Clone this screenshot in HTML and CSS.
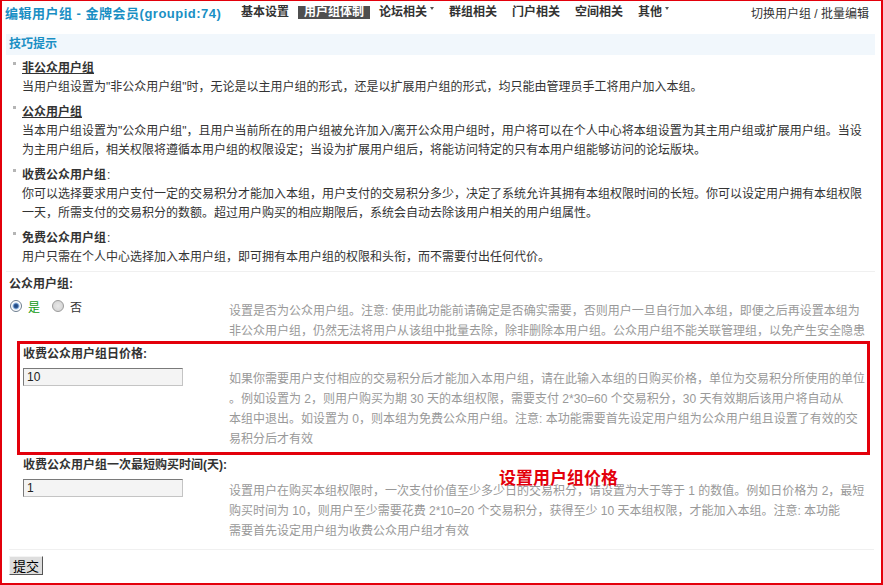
FILE: index.html
```html
<!DOCTYPE html>
<html lang="zh-CN">
<head>
    <meta charset="UTF-8">
    <title>编辑用户组 - 金牌会员</title>
    <link rel="stylesheet" href="styles.css">
</head>
<body>
<div class="frame">
    <div class="topbar">
        <h3 class="page-title">编辑用户组 - 金牌会员(groupid:74)</h3>
        <ul class="nav">
            <li>基本设置</li>
            <li class="current">用户组体制</li>
            <li>论坛相关<span class="caret"></span></li>
            <li>群组相关</li>
            <li>门户相关</li>
            <li>空间相关</li>
            <li>其他<span class="caret"></span></li>
        </ul>
        <a class="switch">切换用户组 / 批量编辑</a>
    </div>

    <div class="tips">
        <div class="tips-head">技巧提示</div>
        <ul class="tips-list">
            <li>
                <div class="tip-title"><u>非公众用户组</u></div>
                <div>当用户组设置为"非公众用户组"时，无论是以主用户组的形式，还是以扩展用户组的形式，均只能由管理员手工将用户加入本组。</div>
            </li>
            <li>
                <div class="tip-title"><u>公众用户组</u></div>
                <div>当本用户组设置为"公众用户组"，且用户当前所在的用户组被允许加入/离开公众用户组时，用户将可以在个人中心将本组设置为其主用户组或扩展用户组。当设<br>为主用户组后，相关权限将遵循本用户组的权限设定；当设为扩展用户组后，将能访问特定的只有本用户组能够访问的论坛版块。</div>
            </li>
            <li>
                <div class="tip-title">收费公众用户组<span class="colon">:</span></div>
                <div>你可以选择要求用户支付一定的交易积分才能加入本组，用户支付的交易积分多少，决定了系统允许其拥有本组权限时间的长短。你可以设定用户拥有本组权限<br>一天，所需支付的交易积分的数额。超过用户购买的相应期限后，系统会自动去除该用户相关的用户组属性。</div>
            </li>
            <li>
                <div class="tip-title">免费公众用户组<span class="colon">:</span></div>
                <div>用户只需在个人中心选择加入本用户组，即可拥有本用户组的权限和头衔，而不需要付出任何代价。</div>
            </li>
        </ul>
    </div>

    <form class="form">
        <div class="label">公众用户组:</div>
        <div class="row">
            <div class="field radios">
                <label class="yes"><input type="radio" name="public" checked>是</label>
                <label><input type="radio" name="public">否</label>
            </div>
            <div class="desc">设置是否为公众用户组。注意: 使用此功能前请确定是否确实需要，否则用户一旦自行加入本组，即便之后再设置本组为<br>非公众用户组，仍然无法将用户从该组中批量去除，除非删除本用户组。公众用户组不能关联管理组，以免产生安全隐患</div>
        </div>

        <div class="mark">
            <div class="label">收费公众用户组日价格:</div>
            <div class="row sub-row">
                <div class="field"><input class="txt" type="text" value="10"></div>
                <div class="desc">如果你需要用户支付相应的交易积分后才能加入本用户组，请在此输入本组的日购买价格，单位为交易积分所使用的单位<br>。例如设置为 2，则用户购买为期 30 天的本组权限，需要支付 2*30=60 个交易积分，30 天有效期后该用户将自动从<br>本组中退出。如设置为 0，则本组为免费公众用户组。注意: 本功能需要首先设定用户组为公众用户组且设置了有效的交<br>易积分后才有效</div>
            </div>
        </div>

        <div class="sub">
            <div class="label">收费公众用户组一次最短购买时间(天):</div>
            <div class="row sub-row">
                <div class="field"><input class="txt" type="text" value="1"></div>
                <div class="desc">设置用户在购买本组权限时，一次支付价值至少多少日的交易积分，请设置为大于等于 1 的数值。例如日价格为 2，最短<br>购买时间为 10，则用户至少需要花费 2*10=20 个交易积分，获得至少 10 天本组权限，才能加入本组。注意: 本功能<br>需要首先设定用户组为收费公众用户组才有效</div>
            </div>
            <span class="note">设置用户组价格</span>
        </div>

        <div class="submit-row">
            <button type="button" class="btn">提交</button>
        </div>
    </form>
</div>
</body>
</html>
```

FILE: styles.css
```css
body {
    margin: 0;
    font: 12px "Liberation Sans", "Noto Sans CJK SC", sans-serif;
    color: #333;
}
.frame {
    height: 585px;
    box-sizing: border-box;
    border: 2px solid #e3000b;
    border-top-width: 1px;
}

/* top bar */
.topbar {
    display: flex;
    align-items: center;
    height: 22px;
    padding: 0 12px 0 3px;
}
.page-title {
    width: 230px;
    margin: 0;
    font-size: 13px;
    font-weight: bold;
    letter-spacing: 0.5px;
    color: #1a8fc4;
    white-space: nowrap;
}
.nav {
    display: flex;
    margin: 0;
    padding: 0;
    list-style: none;
}
.nav li {
    margin-right: 3px;
    padding: 0 6px;
    line-height: 13px;
    font-weight: bold;
    color: #333;
    white-space: nowrap;
}
.nav li.current {
    background: #4f4f4f;
    color: #fff;
}
.caret {
    display: inline-block;
    margin-left: 3px;
    vertical-align: 6px;
    border-left: 2px solid transparent;
    border-right: 2px solid transparent;
    border-top: 3px solid #555;
}
.switch {
    margin-left: auto;
    color: #333;
    white-space: nowrap;
}

/* tips */
.tips {
    margin: 11px 6px 0 4px;
    border-bottom: 1px solid #f0f0f0;
}
.tips-head {
    height: 21px;
    line-height: 21px;
    padding-left: 3px;
    background: #f1f7fc;
    font-weight: bold;
    color: #1a8fc4;
}
.tips-list {
    margin: 0;
    padding: 4px 0 4px;
    list-style: none;
    line-height: 19px;
    white-space: nowrap;
}
.tips-list li {
    display: grid;
    grid-template-columns: 16px 1fr;
    margin-bottom: 6px;
}
.tips-list li:last-child {
    margin-bottom: 0;
}
.tips-list li::before {
    content: "";
    grid-row: 1 / span 2;
    width: 3px;
    height: 3px;
    margin: 3px 0 0 7px;
    background: #b5b5b5;
}
.tip-title {
    font-weight: bold;
    color: #333;
}
.tip-title .colon {
    font-weight: normal;
    margin-left: 1px;
}

/* form */
.form {
    padding: 3px 7px 0;
}
.label {
    line-height: 19px;
    font-weight: bold;
    color: #333;
}
.row {
    display: grid;
    grid-template-columns: 220px 1fr;
}
.radios {
    display: flex;
    align-items: center;
    padding-top: 3px;
    height: 18px;
}
.radios label {
    display: flex;
    align-items: center;
    margin-right: 11px;
}
.radios label.yes {
    color: #119911;
}
.radios input {
    appearance: none;
    width: 12px;
    height: 12px;
    margin: 0 6px 0 1px;
    border: 1px solid #9a9a9a;
    border-radius: 50%;
    background: radial-gradient(circle, #e8e8e8 0, #cfcfcf 100%);
    box-sizing: border-box;
}
.radios input:checked {
    border-color: #6d7d8f;
    background: radial-gradient(circle, #1d3f74 0, #2f5c9a 2px, #9fc0e6 3px, #fff 4px);
}
.desc {
    padding-top: 7px;
    line-height: 20px;
    color: #999;
    white-space: nowrap;
}

.mark {
    margin: 0 4px 0 8px;
    padding: 1px 0 3px 3px;
    border: 3px solid #e3000b;
}
.sub-row {
    grid-template-columns: 206px 1fr;
}
.sub-row .field {
    padding-top: 4px;
}
.mark .desc {
    padding-top: 5px;
}
.sub {
    position: relative;
    padding: 1px 0 8px 14px;
}
.sub .desc {
    padding-top: 6px;
}
.txt {
    width: 160px;
    height: 18px;
    box-sizing: border-box;
    padding: 0 3px;
    border: 1px solid;
    border-color: #7a7a7a #c4c4c4 #c4c4c4 #7a7a7a;
    background: #f4f4f4;
    font: 12px "Liberation Sans", "Noto Sans CJK SC", sans-serif;
    color: #222;
}
.note {
    position: absolute;
    left: 490px;
    top: 13px;
    font-size: 17px;
    line-height: 22px;
    font-weight: bold;
    color: #e3000b;
}

.submit-row {
    border-top: 1px solid #f0f0f0;
    padding-top: 6px;
}
.btn {
    height: 19px;
    padding: 0 3px;
    border: 1px solid;
    border-color: #f4f4f4 #555 #555 #f4f4f4;
    background: #dedede;
    font: 13px "Noto Sans CJK SC", sans-serif;
    line-height: 15px;
    color: #000;
}
```
